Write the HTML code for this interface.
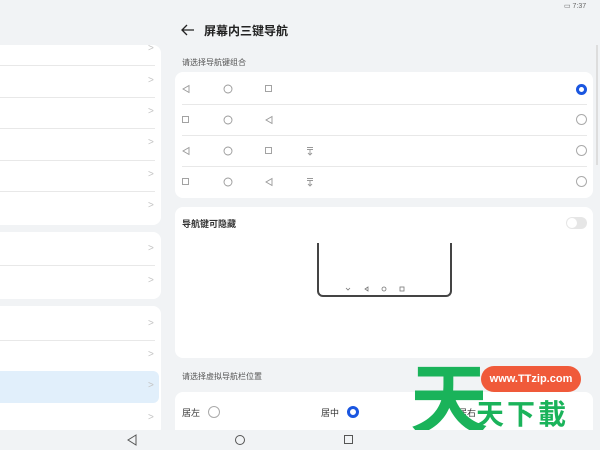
<!DOCTYPE html>
<html><head><meta charset="utf-8"><style>
*{margin:0;padding:0;box-sizing:border-box}
html,body{width:600px;height:450px;overflow:hidden}
body{background:#f1f3f5;font-family:"Liberation Sans","Noto Sans CJK SC",sans-serif;position:relative;color:#222}
.a{position:absolute}
.card{position:absolute;background:#fff;border-radius:8px}
.sep{position:absolute;height:1px;background:#e8e8e8}
.chev{position:absolute;left:148px;color:#c4c4c4;font-size:10px}
.radio{position:absolute;width:11px;height:11px;border:1px solid #aaa;border-radius:50%}
.rsel{border:3px solid #1a56e0}
.t{font-size:9px;color:#555}
</style></head><body>
<div class="card" style="left:-8px;top:45px;width:169px;height:180px"></div>
<div class="sep" style="left:0;top:65px;width:155px"></div>
<div class="sep" style="left:0;top:97px;width:155px"></div>
<div class="sep" style="left:0;top:128px;width:155px"></div>
<div class="sep" style="left:0;top:160px;width:155px"></div>
<div class="sep" style="left:0;top:191px;width:155px"></div>
<div class="card" style="left:-8px;top:232px;width:169px;height:67px"></div>
<div class="sep" style="left:0;top:265px;width:155px"></div>
<div class="card" style="left:-8px;top:306px;width:169px;height:130px"></div>
<div class="sep" style="left:0;top:340px;width:155px"></div>
<div class="a" style="left:0;top:371px;width:159px;height:32px;background:#e1effb;border-radius:0 6px 6px 0"></div>
<div class="chev" style="top:43px">&gt;</div>
<div class="chev" style="top:75px">&gt;</div>
<div class="chev" style="top:106px">&gt;</div>
<div class="chev" style="top:137px">&gt;</div>
<div class="chev" style="top:169px">&gt;</div>
<div class="chev" style="top:200px">&gt;</div>
<div class="chev" style="top:243px">&gt;</div>
<div class="chev" style="top:275px">&gt;</div>
<div class="chev" style="top:318px">&gt;</div>
<div class="chev" style="top:349px">&gt;</div>
<div class="chev" style="top:380px">&gt;</div>
<div class="chev" style="top:412px">&gt;</div>
<div class="a" style="left:564px;top:2px;font-size:7px;color:#666">▭ 7:37</div>
<svg class="a" style="left:181px;top:24px" width="14" height="12"><path d="M13 6H1M6 1L1 6L6 11" fill="none" stroke="#222" stroke-width="1.3"/></svg>
<div class="a" style="left:204px;top:22px;font-size:12px;font-weight:bold;color:#222">屏幕内三键导航</div>
<div class="a t" style="left:182px;top:57px;font-size:8px">请选择导航键组合</div>
<div class="card" style="left:175px;top:72px;width:418px;height:126px"></div>
<div class="sep" style="left:182px;top:104px;width:405px"></div>
<div class="sep" style="left:182px;top:135px;width:405px"></div>
<div class="sep" style="left:182px;top:166px;width:405px"></div>
<svg class="a" style="left:175px;top:72px" width="418" height="126" fill="none" stroke="#999" stroke-width="0.9">
<path d="M14 13.5L8 17L14 20.5Z"/><circle cx="53" cy="17" r="4"/><rect x="90.5" y="13.5" width="6" height="6"/>
<rect x="7.5" y="44.5" width="6" height="6"/><circle cx="53" cy="48" r="4"/><path d="M97 44.5L91 48L97 51.5Z"/>
<path d="M14 75.5L8 79L14 82.5Z"/><circle cx="53" cy="79" r="4"/><rect x="90.5" y="75.5" width="6" height="6"/><path d="M132 75.5h6M132 77.5h6M135 78v5M133 81l2 2 2-2"/>
<rect x="7.5" y="106.5" width="6" height="6"/><circle cx="53" cy="110" r="4"/><path d="M97 106.5L91 110L97 113.5Z"/><path d="M132 106.5h6M132 108.5h6M135 109v5M133 112l2 2 2-2"/>
</svg>
<div class="radio rsel" style="left:576px;top:84px"></div>
<div class="radio" style="left:576px;top:114px"></div>
<div class="radio" style="left:576px;top:145px"></div>
<div class="radio" style="left:576px;top:176px"></div>
<div class="card" style="left:175px;top:207px;width:418px;height:151px"></div>
<div class="a" style="left:182px;top:217px;font-size:9px;font-weight:bold;color:#333">导航键可隐藏</div>
<div class="a" style="left:566px;top:217px;width:21px;height:12px;border-radius:6px;background:#e6e6e6"><div style="width:10px;height:10px;margin:1px;border-radius:50%;background:#fff"></div></div>
<div class="a" style="left:317px;top:243px;width:135px;height:54px;border:2px solid #444;border-top:none;border-radius:0 0 6px 6px"></div>
<svg class="a" style="left:340px;top:284px" width="70" height="10" fill="none" stroke="#777" stroke-width="0.8"><path d="M6 4l2 2 2-2"/><path d="M28 3L25 5L28 7Z"/><circle cx="44" cy="5" r="2"/><rect x="60" y="3" width="4" height="4"/></svg>
<div class="a t" style="left:182px;top:371px;font-size:8px">请选择虚拟导航栏位置</div>
<div class="card" style="left:175px;top:392px;width:418px;height:50px"></div>
<div class="a" style="left:182px;top:406px;font-size:9px;color:#333">居左</div>
<div class="radio" style="left:208px;top:406px;width:12px;height:12px"></div>
<div class="a" style="left:321px;top:406px;font-size:9px;color:#333">居中</div>
<div class="radio rsel" style="left:347px;top:406px;width:12px;height:12px"></div>
<div class="a" style="left:458px;top:406px;font-size:9px;color:#333">居右</div>
<div class="a" style="left:410px;top:356px;font-size:78px;line-height:78px;font-weight:bold;color:#1ab35a;font-family:'Noto Sans CJK SC',sans-serif">天</div>
<div class="a" style="left:481px;top:366px;width:100px;height:26px;border-radius:13px;background:#f05a3a;color:#fff;font-size:11px;font-weight:bold;text-align:center;line-height:26px">www.TTzip.com</div>
<div class="a" style="left:476px;top:397px;font-size:28px;line-height:32px;font-weight:bold;color:#1ab35a;letter-spacing:3px;font-family:'Noto Sans CJK SC',sans-serif">天下載</div>
<div class="a" style="left:0;top:430px;width:600px;height:20px;background:#f1f3f5"></div>
<svg class="a" style="left:0;top:430px" width="600" height="20" fill="none" stroke="#555" stroke-width="1"><path d="M136 5L128 10L136 15Z"/><circle cx="240" cy="10" r="4.5"/><rect x="344.5" y="5.5" width="8" height="8"/></svg>
<div class="a" style="left:596px;top:45px;width:2px;height:120px;background:#ddd"></div>
</body></html>
